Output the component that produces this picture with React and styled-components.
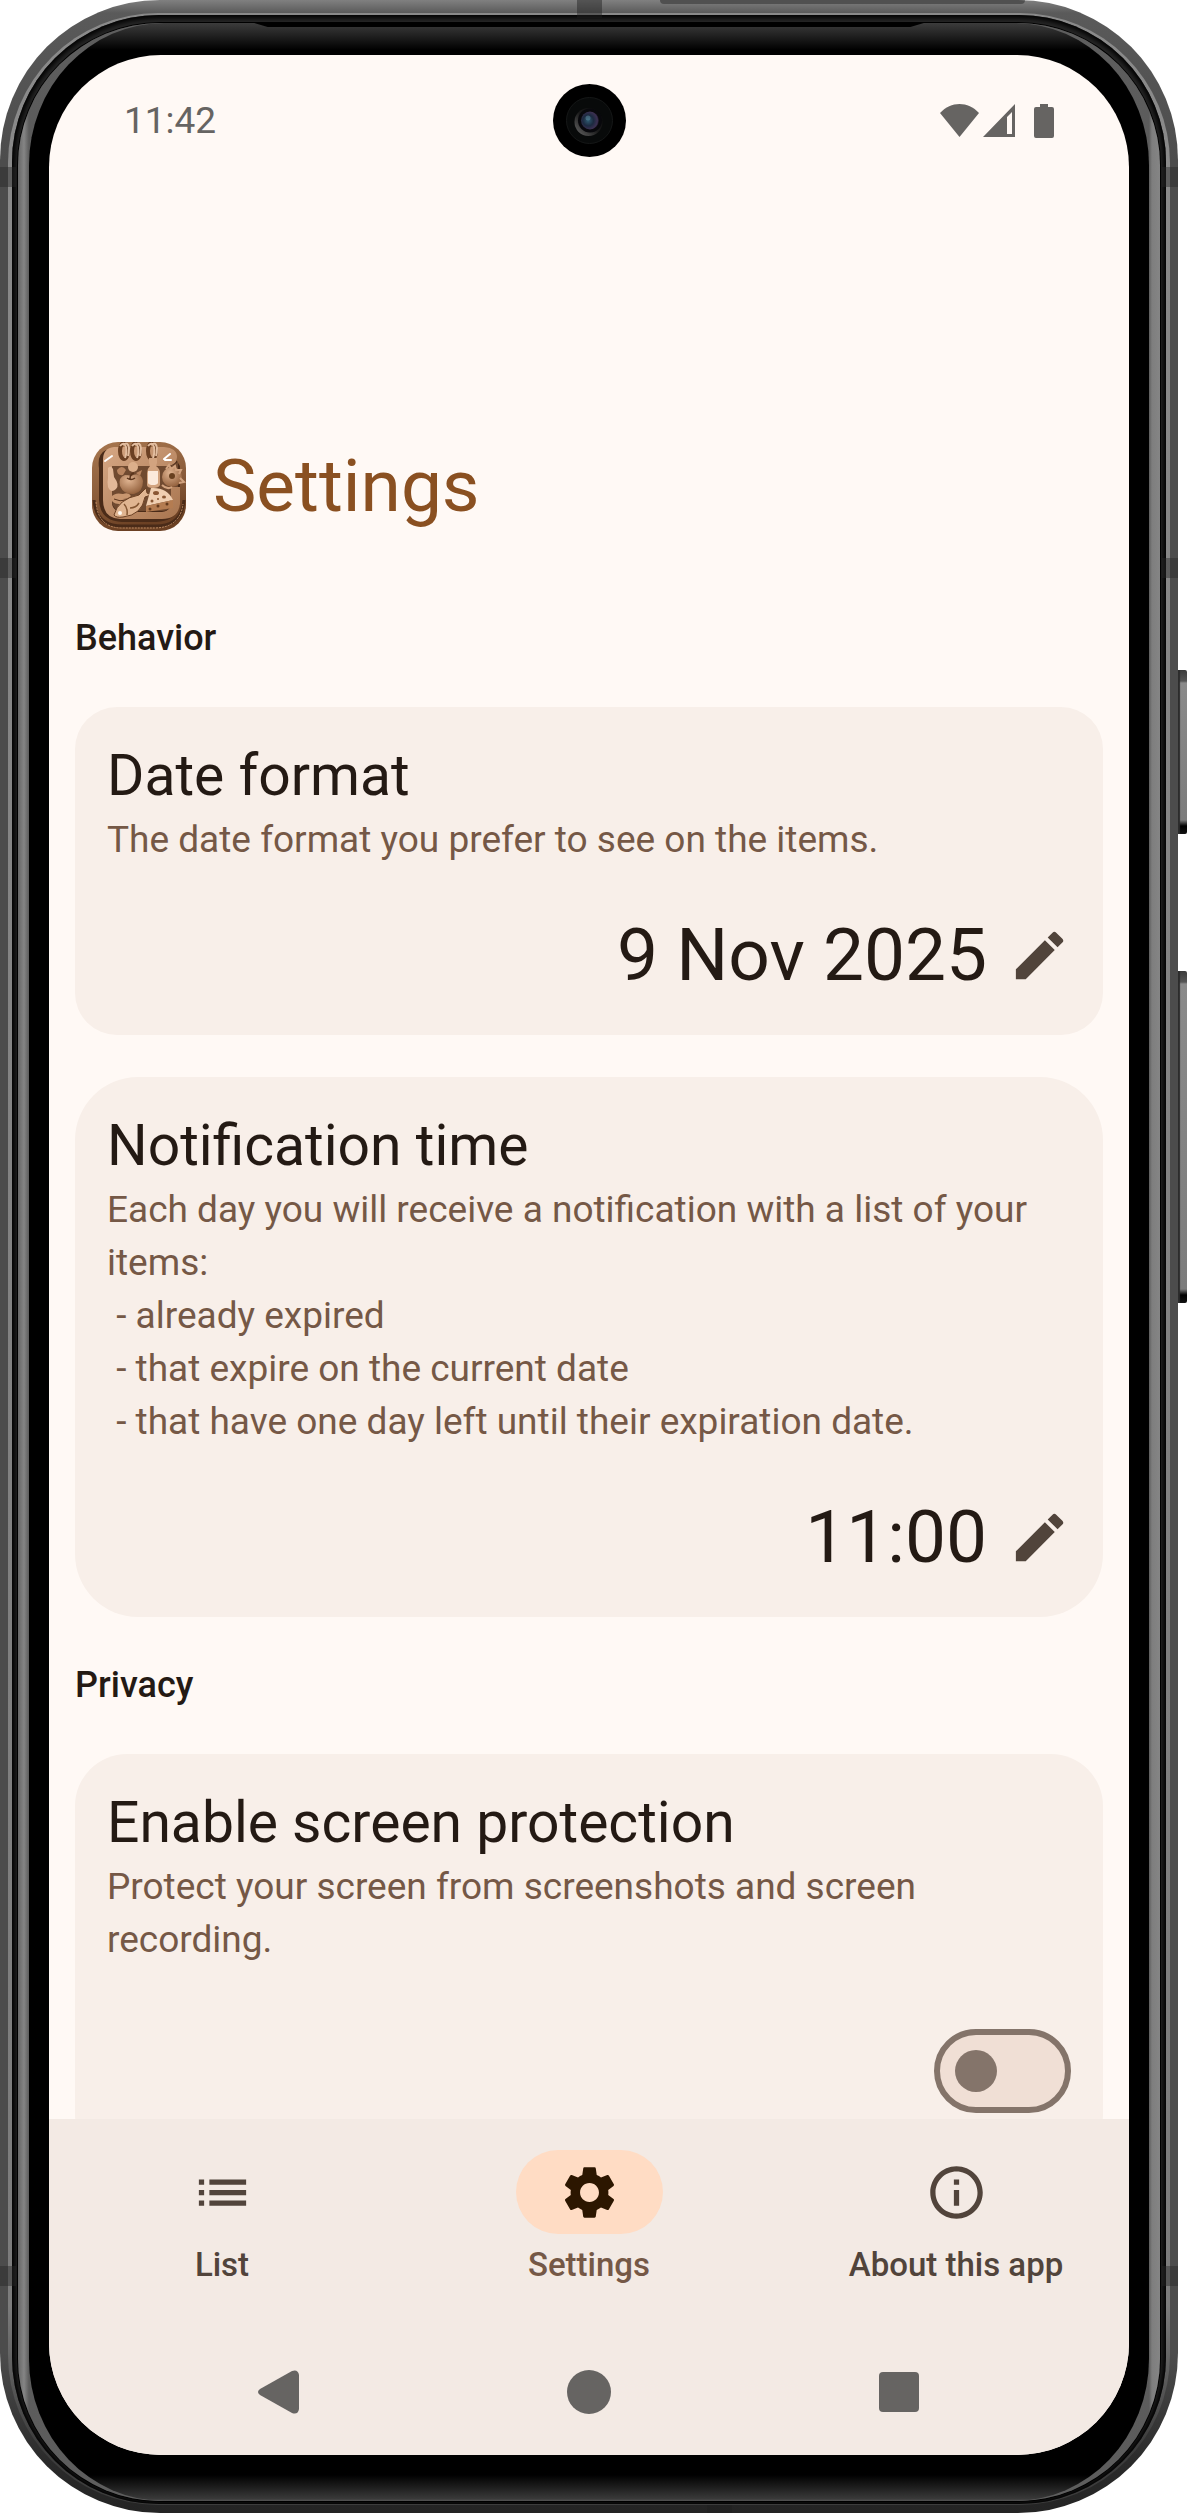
import React, { useState } from 'react';
import styled, { createGlobalStyle, ThemeProvider } from 'styled-components';
import { MdEdit, MdInfoOutline, MdList, MdSettings } from 'react-icons/md';

const theme = {
  surface: '#fff9f5',
  card: '#f8efe9',
  bar: '#f3eae4',
  primary: '#8a5021',
  text: '#241a14',
  muted: '#755846',
  icon: '#51443b',
  outline: '#84746a',
  track: '#f0dfd5',
  pill: '#ffdcc4',
  onPill: '#2c1600',
  system: '#666462',
  fontSize: {
    s: '33px',
    m: '37px',
    l: '57px',
    xl: '73px',
  },
};

const GlobalStyle = createGlobalStyle`
  *,
  *::before,
  *::after {
    box-sizing: border-box;
  }

  body {
    margin: 0;
    background: #ffffff;
    font-family: Roboto, 'Liberation Sans', sans-serif;
  }

  button {
    border: 0;
    padding: 0;
    background: none;
    color: inherit;
    font: inherit;
    cursor: pointer;
  }
`;

/* ---------- phone body ---------- */

const Device = styled.div`
  position: relative;
  display: flex;
  height: 100vh;
  padding-right: 9px;
`;

const Shell = styled.div`
  position: relative;
  flex: 1;
  min-width: 0;
  display: flex;
  padding: 13px 8px 8px;
  border-radius: 160px;
  overflow: hidden;
  background: linear-gradient(
    to bottom,
    #808080 0,
    #5a5a5a 13px,
    #4c4c4c 160px,
    #4c4c4c calc(100% - 160px),
    #2a2a2a calc(100% - 50px),
    #242424 100%
  );
`;

const Bevel = styled.div`
  flex: 1;
  min-width: 0;
  display: flex;
  padding: 2px 4px 1px;
  border-radius: 150px;
  background: linear-gradient(
    to bottom,
    #8a8a8a 0,
    #7c7c7c calc(100% - 200px),
    #3c3c3c calc(100% - 60px),
    #3c3c3c 100%
  );
`;

const Groove = styled.div`
  flex: 1;
  min-width: 0;
  display: flex;
  padding: 8px 6px 3px;
  border-radius: 147px;
  background: #262626;
  box-shadow: inset 0 0 5px 3px #000000;
`;

const GlassEdge = styled.div`
  flex: 1;
  min-width: 0;
  display: flex;
  padding: 0 11px;
  border-radius: 142px;
  background: linear-gradient(
    to right,
    #666666 0,
    #858585 6px,
    #5c5c5c 11px,
    #6a6a6a 50%,
    #5c5c5c calc(100% - 11px),
    #7e7e7e calc(100% - 8px),
    #858585 100%
  );
  box-shadow: 0 0 0 1px #000000;
`;

const Bezel = styled.div`
  flex: 1;
  min-width: 0;
  display: flex;
  flex-direction: column;
  align-items: center;
  padding: 0 20px 46px;
  border-radius: 135px / 142px;
  background: linear-gradient(
    to bottom,
    #3c3c3c 0,
    #222222 12px,
    #000000 27px,
    #000000 calc(100% - 26px),
    #3a3a3a calc(100% - 2px),
    #555555 100%
  );
`;

const Earpiece = styled.div`
  flex: none;
  width: 62%;
  height: 4px;
  margin-bottom: 28px;
  background: #000000;
  clip-path: polygon(0 0, 100% 0, 98% 100%, 2% 100%);
`;

const Screen = styled.div`
  flex: 1;
  min-height: 0;
  width: 100%;
  display: flex;
  flex-direction: column;
  border-radius: 112px;
  overflow: hidden;
  background: ${({ theme: t }) => t.surface};
`;

const SideAntenna = styled.span`
  position: absolute;
  top: ${({ $top }) => $top};
  ${({ $side }) => $side}: 0;
  width: 16px;
  height: 20px;
  background: rgba(40, 40, 40, 0.45);
`;

const EdgeAntenna = styled.span`
  position: absolute;
  left: ${({ $left }) => $left};
  ${({ $side }) => $side}: 0;
  width: 25px;
  height: ${({ $side }) => ($side === 'top' ? '18px' : '8px')};
  background: rgba(30, 30, 30, 0.45);
`;

const TopWindow = styled.span`
  position: absolute;
  top: 0;
  left: 56%;
  width: 31%;
  height: 4px;
  border-radius: 0 0 16px 16px;
  background: #505050;
`;

const HardwareKey = styled.span`
  position: absolute;
  right: 0;
  top: ${({ $top }) => $top};
  width: 9px;
  height: ${({ $height }) => $height};
  border-radius: 0 2px 2px 0;
  background: linear-gradient(
    to bottom,
    #3c3c3c 0,
    #555555 11px,
    #8a8a8a 13px,
    #7c7c7c calc(100% - 14px),
    #000000 calc(100% - 8px),
    #111111 100%
  );
  box-shadow: inset 2px 0 1px #2c2c2c;
`;

/* ---------- status bar ---------- */

const StatusBar = styled.div`
  flex: none;
  display: grid;
  grid-template-columns: 1fr auto 1fr;
  align-items: center;
  height: 131px;
  padding: 0 75px;
  color: ${({ theme: t }) => t.system};
`;

const Clock = styled.time`
  font-size: ${({ theme: t }) => t.fontSize.m};
  line-height: 44px;
`;

const StatusIcons = styled.svg`
  justify-self: end;
  width: 114px;
  height: 34px;
`;

const CameraLens = styled.svg`
  width: 73px;
  height: 73px;
`;

/* ---------- content ---------- */

const Content = styled.main`
  flex: 1;
  min-height: 0;
  overflow-y: auto;
  scrollbar-width: none;
`;

const TitleRow = styled.header`
  display: flex;
  align-items: center;
  gap: 27px;
  padding: 253px 43px 36px;
`;

const AppIcon = styled.svg`
  width: 94px;
  height: 89px;
`;

const Title = styled.h1`
  margin: 0;
  color: ${({ theme: t }) => t.primary};
  font-size: ${({ theme: t }) => t.fontSize.xl};
  font-weight: 400;
  line-height: 95px;
`;

const Section = styled.section`
  display: flex;
  flex-direction: column;
  gap: 42px;
  padding: 42px 26px 0;
`;

const SectionTitle = styled.h2`
  margin: 0;
  color: ${({ theme: t }) => t.text};
  font-size: 36px;
  font-weight: 500;
  line-height: 53px;
`;

const Card = styled.article`
  display: flex;
  flex-direction: column;
  padding: 32px;
  border-radius: ${({ $radius }) => $radius};
  background: ${({ theme: t }) => t.card};
`;

const CardTitle = styled.h3`
  margin: 0;
  color: ${({ theme: t }) => t.text};
  font-size: ${({ theme: t }) => t.fontSize.l};
  font-weight: 400;
  line-height: 74px;
`;

const CardText = styled.p`
  margin: 0 0 42px;
  color: ${({ theme: t }) => t.muted};
  font-size: ${({ theme: t }) => t.fontSize.m};
  line-height: 53px;
  white-space: pre-wrap;
`;

const ValueButton = styled.button`
  align-self: flex-end;
  display: flex;
  align-items: center;
  gap: 21px;
  color: ${({ theme: t }) => t.text};
  font-size: ${({ theme: t }) => t.fontSize.xl};
  line-height: 95px;

  svg {
    width: 63px;
    height: 63px;
    color: ${({ theme: t }) => t.icon};
  }
`;

const SwitchRow = styled.label`
  align-self: flex-end;
  display: flex;
  align-items: center;
  height: 126px;
`;

const Switch = styled.input`
  appearance: none;
  display: flex;
  align-items: center;
  width: 137px;
  height: 84px;
  margin: 0;
  padding: 0 15px;
  border: 6px solid ${({ theme: t }) => t.outline};
  border-radius: 42px;
  background: ${({ theme: t }) => t.track};
  cursor: pointer;

  &::before {
    content: '';
    width: 42px;
    height: 42px;
    border-radius: 50%;
    background: ${({ theme: t }) => t.outline};
  }

  &:checked {
    justify-content: flex-end;
    border-color: ${({ theme: t }) => t.primary};
    background: ${({ theme: t }) => t.primary};
  }

  &:checked::before {
    background: #ffffff;
  }
`;

/* ---------- bottom bars ---------- */

const BottomNav = styled.nav`
  flex: none;
  display: grid;
  grid-template-columns: repeat(3, 1fr);
  gap: 21px;
  height: 210px;
  padding-top: 31px;
  background: ${({ theme: t }) => t.bar};
`;

const NavLink = styled.a`
  display: flex;
  flex-direction: column;
  align-items: center;
  gap: 10px;
  color: ${({ theme: t, $active }) => ($active ? t.muted : t.icon)};
  font-size: ${({ theme: t }) => t.fontSize.s};
  font-weight: 500;
  line-height: 42px;
  text-decoration: none;
  white-space: nowrap;
`;

const NavPill = styled.span`
  display: flex;
  align-items: center;
  justify-content: center;
  width: 147px;
  height: 84px;
  border-radius: 42px;
  color: ${({ theme: t, $active }) => ($active ? t.onPill : t.icon)};
  background: ${({ theme: t, $active }) => ($active ? t.pill : 'transparent')};

  svg {
    width: 63px;
    height: 63px;
  }
`;

const SystemNav = styled.div`
  flex: none;
  display: grid;
  grid-template-columns: repeat(3, 1fr);
  height: 126px;
  padding: 0 75px;
  background: ${({ theme: t }) => t.bar};
`;

const SystemButton = styled.button`
  display: flex;
  align-items: center;
  justify-content: center;
  color: ${({ theme: t }) => t.system};

  svg {
    width: 48px;
    height: 48px;
  }
`;

/* ---------- drawings ---------- */

const Camera = () => (
  <CameraLens viewBox="0 0 73 73" aria-hidden="true">
    <defs>
      <radialGradient id="lens" cx="0.4" cy="0.5" r="0.6">
        <stop offset="0" stopColor="#2f5a70" />
        <stop offset="0.5" stopColor="#1c2a40" />
        <stop offset="0.85" stopColor="#3c3052" />
        <stop offset="1" stopColor="#14101c" />
      </radialGradient>
      <linearGradient id="lensRing" x1="0" y1="1" x2="1" y2="0">
        <stop offset="0" stopColor="#6a6a6a" />
        <stop offset="0.5" stopColor="#1a1a1a" />
        <stop offset="1" stopColor="#0a0a0a" />
      </linearGradient>
    </defs>
    <circle cx="36.5" cy="36.5" r="36.5" fill="#000000" />
    <circle cx="36.5" cy="36.5" r="23" fill="#080a0a" stroke="#151717" />
    <circle cx="35.5" cy="38" r="14" fill="url(#lensRing)" />
    <circle cx="37" cy="36.5" r="12" fill="#08080c" />
    <circle cx="37" cy="36.5" r="9" fill="url(#lens)" />
    <circle cx="35" cy="34" r="2.5" fill="#6fa0b4" opacity="0.4" />
  </CameraLens>
);

const Indicators = () => (
  <StatusIcons viewBox="0 0 114 34" fill="currentColor" role="img" aria-label="Wi-Fi, signal, battery">
    <path d="M0 9 C11 -3 28 -3 39 9 L19.500 33 Z" />
    <path fillRule="evenodd" d="M43 33 L75 0 V33 Z M67 13 V30 H72 V8 Z" />
    <path d="M100 0 h8 v3 h4 q2 0 2 2 v27 q0 2 -2 2 h-16 q-2 0 -2 -2 v-27 q0 -2 2 -2 h4 z" />
  </StatusIcons>
);

const PantryIcon = () => (
  <AppIcon viewBox="0 0 94 89" aria-hidden="true">
    <defs>
      <linearGradient id="tray" x1="0" y1="0" x2="0.3" y2="1">
        <stop offset="0" stopColor="#a8774f" />
        <stop offset="0.6" stopColor="#8a5c3a" />
        <stop offset="1" stopColor="#6b4023" />
      </linearGradient>
      <linearGradient id="rim" x1="0" y1="0" x2="1" y2="1">
        <stop offset="0" stopColor="#d6a784" />
        <stop offset="1" stopColor="#a8754f" />
      </linearGradient>
      <radialGradient id="food" cx="0.4" cy="0.3" r="0.8">
        <stop offset="0" stopColor="#e0b491" />
        <stop offset="1" stopColor="#8a5733" />
      </radialGradient>
    </defs>
    <rect width="94" height="89" rx="26" fill="url(#tray)" />
    <path d="M2 58 Q4 84 30 84 H64 Q90 84 92 58" fill="none" stroke="#4a2b18" strokeWidth="3" />
    <path d="M4 60 Q6 87 32 86 H62 Q88 86 91 62" fill="none" stroke="#c08d64" strokeWidth="1" strokeDasharray="2 1" />
    <path d="M14 8 Q5 12 7 26 V58 Q8 79 30 80 H64 Q86 79 88 60 V24 L78 8 Z" fill="#4a2b18" />
    <path d="M22 5 H72 Q85 6 85 15 Q85 23 76 24 H20 V60 Q20 69 30 70 H70 Q79 69 79 60 V45 H88 V62 Q86 77 70 77 H28 Q11 76 11 58 V18 Q11 6 22 5 Z" fill="url(#rim)" />
    <path d="M20 24 H76 Q84 23 86 19 V45 H79 V62 Q78 69 70 69 H31 Q20 69 20 58 Z" fill="#704a30" />
    <path d="M13 19 l7 -5 M72 17 l6 -5 M73 18 h6" stroke="#ffffff" strokeWidth="2" strokeLinecap="round" />
    <g fill="none" stroke="#6b4023" strokeWidth="4">
      <ellipse cx="32" cy="9" rx="4" ry="8" />
      <ellipse cx="44" cy="9" rx="4" ry="8" />
      <ellipse cx="60" cy="9" rx="4" ry="8" />
    </g>
    <g fill="none" stroke="#e3bea0" strokeWidth="2">
      <path d="M28 4 q4 -5 6 1 q1 6 -1 11 M31 3 q5 -4 6 3 q0 5 -1 8" />
      <path d="M40 4 q4 -5 6 1 q1 6 -1 11 M43 3 q5 -4 6 3 q0 5 -1 8" />
      <path d="M56 4 q4 -5 6 1 q1 6 -1 11 M59 3 q5 -4 6 3 q0 5 -1 8" />
    </g>
    <path d="M16 26 q3 -3 5 1 l1 8 q6 8 2 12 q-5 5 -8 -2 q-1 -5 0 -9 z" fill="#e3b999" />
    <circle cx="41" cy="25" r="5" fill="#dcaf8b" />
    <path d="M25 28 q5 -6 9 0 l-3 5 q-6 1 -6 -5 z M44 31 l6 -3 l-2 6 z" fill="#b98560" />
    <path d="M39 34 q10 -5 12 5 q0 11 -9 13 q-10 1 -14 -8 q-2 -9 5 -11 q4 0 6 1 z" fill="url(#food)" />
    <path d="M38 37 q0 -5 4 -6 M35 36 q4 3 8 0" fill="none" stroke="#5a341c" strokeWidth="1.500" />
    <path d="M57 16 h8 v5 l-1 3 q4 3 4 7 v12 q-1 3 -7 3 t-6 -3 v-12 q0 -4 3 -7 l-1 -3 z" fill="#d2a37f" />
    <path d="M56 29 h10 v12 q-1 2 -5 2 t-5 -2 z" fill="#fbe9db" />
    <circle cx="80" cy="35" r="10" fill="url(#food)" />
    <path d="M74 27 l3 -4 l2 4 l4 -3 l1 4 l5 0 l-2 4 M88 36 l4 4 l-5 1 M70 43 q5 5 10 2" fill="none" stroke="#d2a37f" strokeWidth="2" />
    <circle cx="80" cy="34" r="3" fill="#68401f" />
    <path d="M19 55 q4 -5 12 -3 q6 -2 8 2 q-3 3 -8 3 q6 1 7 4 q-5 4 -11 1 q-8 0 -8 -7 z" fill="#c8966f" />
    <path d="M22 57 q6 3 12 1" fill="none" stroke="#5a341c" />
    <path d="M54 46 l1 5 l4 2 l-6 2 q-3 18 -22 20 q-7 1 -9 -2 q4 -16 25 -20 z" fill="#e0b591" stroke="#6b4023" />
    <path d="M32 62 q4 4 3 11 M38 66 q6 0 9 -5" fill="none" stroke="#845632" strokeWidth="1.500" />
    <circle cx="28" cy="71" r="2" fill="#fffaf3" />
    <path d="M59 46 Q75 45 81 58 L54 64 Z" fill="#f0cfb1" />
    <path d="M54 64 L81 58 V66 L54 70 Z" fill="#b47c51" />
    <g fill="#8a5733">
      <ellipse cx="64" cy="51" rx="3" ry="2" />
      <ellipse cx="72" cy="55" rx="2" ry="1.500" />
      <circle cx="60" cy="59" r="1.500" />
      <circle cx="66" cy="57" r="1" />
    </g>
    <g fill="#633a1d">
      <circle cx="58" cy="67" r="1.500" />
      <circle cx="66" cy="64" r="1.500" />
      <circle cx="75" cy="62" r="1.500" />
    </g>
  </AppIcon>
);

const SettingCard = ({ title, text, radius, children }) => (
  <Card $radius={radius}>
    <CardTitle>{title}</CardTitle>
    <CardText>{text}</CardText>
    {children}
  </Card>
);

const notificationText = `Each day you will receive a notification with a list of your items:
 - already expired
 - that expire on the current date
 - that have one day left until their expiration date.`;

const navItems = [
  { label: 'List', Icon: MdList },
  { label: 'Settings', Icon: MdSettings, active: true },
  { label: 'About this app', Icon: MdInfoOutline },
];

const App = () => {
  const [isProtected, setIsProtected] = useState(false);

  return (
    <ThemeProvider theme={theme}>
      <GlobalStyle />
      <Device>
        <HardwareKey $top="670px" $height="164px" />
        <HardwareKey $top="971px" $height="332px" />
        <Shell>
          <TopWindow />
          <Bevel>
            <Groove>
              <GlassEdge>
                <Bezel>
                  <Earpiece />
                  <Screen>
                    <StatusBar>
                      <Clock>11:42</Clock>
                      <Camera />
                      <Indicators />
                    </StatusBar>
                    <Content>
                      <TitleRow>
                        <PantryIcon />
                        <Title>Settings</Title>
                      </TitleRow>
                      <Section>
                        <SectionTitle>Behavior</SectionTitle>
                        <SettingCard
                          title="Date format"
                          text="The date format you prefer to see on the items."
                          radius="42px"
                        >
                          <ValueButton type="button">
                            9 Nov 2025
                            <MdEdit />
                          </ValueButton>
                        </SettingCard>
                        <SettingCard title="Notification time" text={notificationText} radius="63px">
                          <ValueButton type="button">
                            11:00
                            <MdEdit />
                          </ValueButton>
                        </SettingCard>
                      </Section>
                      <Section>
                        <SectionTitle>Privacy</SectionTitle>
                        <SettingCard
                          title="Enable screen protection"
                          text="Protect your screen from screenshots and screen recording."
                          radius="52px"
                        >
                          <SwitchRow>
                            <Switch
                              type="checkbox"
                              role="switch"
                              aria-label="Enable screen protection"
                              checked={isProtected}
                              onChange={(e) => setIsProtected(e.target.checked)}
                            />
                          </SwitchRow>
                        </SettingCard>
                      </Section>
                    </Content>
                    <BottomNav>
                      {navItems.map(({ label, Icon, active }) => (
                        <NavLink key={label} href={`#${label}`} $active={active}>
                          <NavPill $active={active}>
                            <Icon />
                          </NavPill>
                          {label}
                        </NavLink>
                      ))}
                    </BottomNav>
                    <SystemNav>
                      <SystemButton type="button" aria-label="Back">
                        <svg viewBox="0 0 48 48" fill="currentColor">
                          <path d="M5 21 L37 3 Q43 1 44 7 V41 Q43 47 37 45 L5 27 Q1 24 5 21 Z" />
                        </svg>
                      </SystemButton>
                      <SystemButton type="button" aria-label="Home">
                        <svg viewBox="0 0 48 48" fill="currentColor">
                          <circle cx="24" cy="24" r="22" />
                        </svg>
                      </SystemButton>
                      <SystemButton type="button" aria-label="Recent apps">
                        <svg viewBox="0 0 48 48" fill="currentColor">
                          <rect x="4" y="4" width="40" height="40" rx="4" />
                        </svg>
                      </SystemButton>
                    </SystemNav>
                  </Screen>
                </Bezel>
              </GlassEdge>
            </Groove>
          </Bevel>
          {['167px', '558px', 'calc(100% - 247px)'].map((top) => (
            <React.Fragment key={top}>
              <SideAntenna $top={top} $side="left" />
              <SideAntenna $top={top} $side="right" />
            </React.Fragment>
          ))}
          <EdgeAntenna $left="49%" $side="top" />
          <EdgeAntenna $left="60%" $side="bottom" />
        </Shell>
      </Device>
    </ThemeProvider>
  );
};

export default App;
